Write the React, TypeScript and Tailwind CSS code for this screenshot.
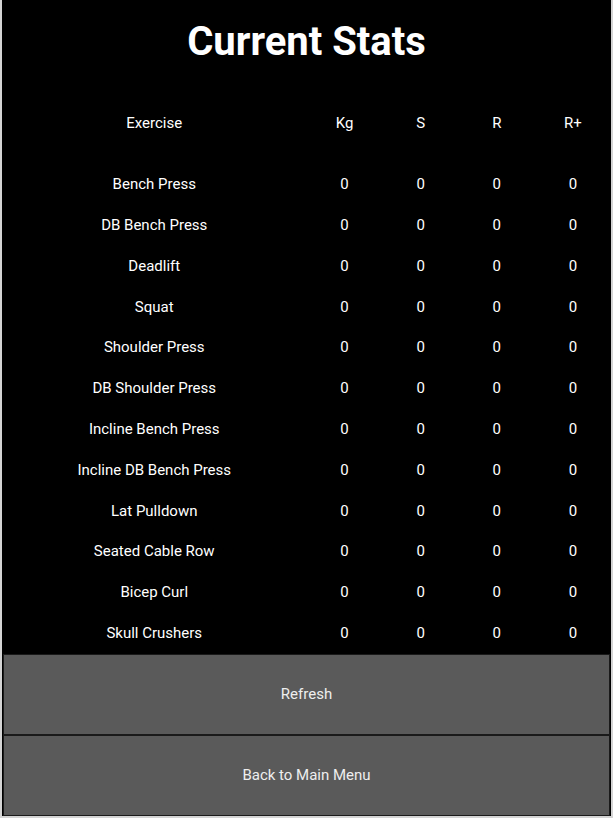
const exercises = [
  "Bench Press",
  "DB Bench Press",
  "Deadlift",
  "Squat",
  "Shoulder Press",
  "DB Shoulder Press",
  "Incline Bench Press",
  "Incline DB Bench Press",
  "Lat Pulldown",
  "Seated Cable Row",
  "Bicep Curl",
  "Skull Crushers",
];

const cols = "grid grid-cols-[4fr_1fr_1fr_1fr_1fr] items-center text-center";

export default function App() {
  return (
    <div
      className="h-[818px] w-full bg-[#d4d4d4] px-[2px] text-white"
      style={{ fontFamily: "Roboto, 'Noto Sans', sans-serif" }}
    >
      <div className="flex h-[816px] flex-col bg-black">
        <h1 className="pt-[18px] text-center text-[40px] font-bold leading-[48px]">Current Stats</h1>

        {/* Table header */}
        <div className={`${cols} mt-[46px] h-[20px] text-[15px]`}>
          <span>Exercise</span>
          <span>Kg</span>
          <span>S</span>
          <span>R</span>
          <span>R+</span>
        </div>

        {/* Rows */}
        <div className="mt-[32px] flex flex-col">
          {exercises.map((name) => (
            <div key={name} className={`${cols} h-[40.8px] text-[15px]`}>
              <span>{name}</span>
              <span>0</span>
              <span>0</span>
              <span>0</span>
              <span>0</span>
            </div>
          ))}
        </div>

        {/* Buttons */}
        <div className="mt-auto flex flex-col px-px pb-px">
          <button className="h-[81px] border border-[#1a1a1a] bg-[#5a5a5a] text-[15px] text-[#eeeeee]">
            Refresh
          </button>
          <button className="h-[81px] border border-[#1a1a1a] bg-[#5a5a5a] text-[15px] text-[#eeeeee]">
            Back to Main Menu
          </button>
        </div>
      </div>
    </div>
  );
}
